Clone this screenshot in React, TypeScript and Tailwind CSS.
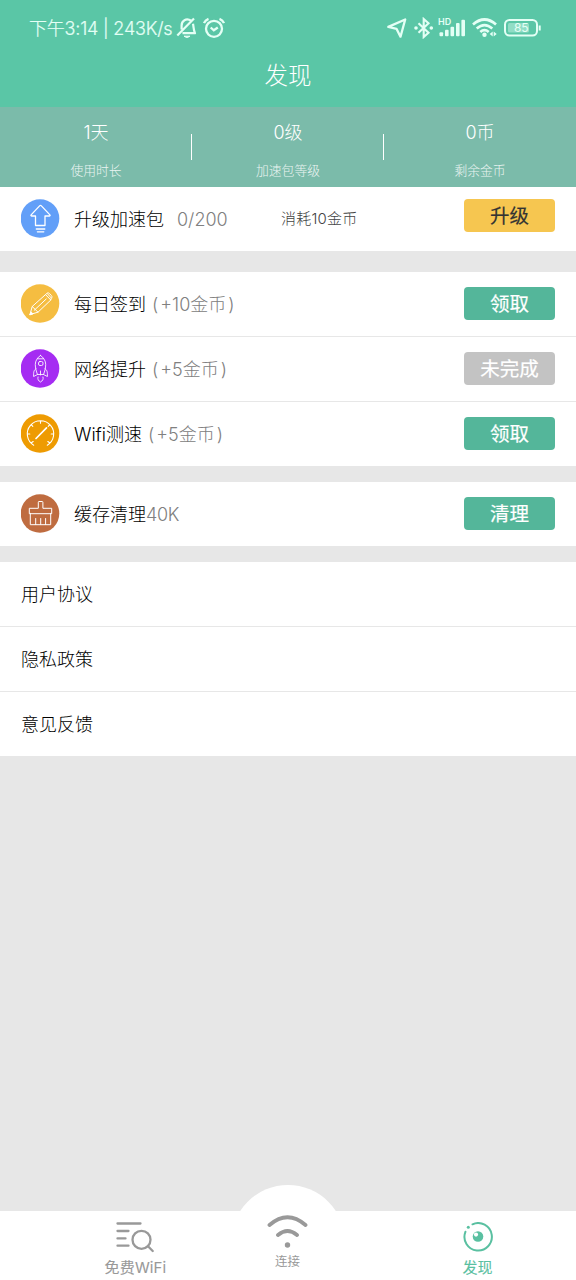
import React from 'react';

const PencilIcon = () => (
  <svg className="w-[39px] h-[39px] -mt-px" viewBox="0 0 39 39" fill="none" stroke="#fff" strokeWidth="1" strokeLinejoin="round" strokeLinecap="round">
    <circle cx="19" cy="19.5" r="19.3" fill="#f5bd41" stroke="none" />
    <path d="M9 30.500l2.200-8L24.500 10.600l5.300 5.400-12.800 12.200-8 2.300zM11.200 22.500l5.800 5.700M13.200 26.300l12-11.300M24.500 10.600l1.300-1.200c1-.9 2-.6 2.800.2l1.800 2c.8.9.8 1.800-.1 2.600L29.800 16M26.300 9.600l4 4.400" />
    <path d="M9 30.500l1-2.700 1.700 1.900z" fill="#fff" />
  </svg>
);

const UpIcon = () => (
  <svg className="w-[39px] h-[39px] -mt-px" viewBox="0 0 39 39" fill="none" stroke="#fff" strokeWidth="1.300" strokeLinejoin="round" strokeLinecap="round">
    <circle cx="19" cy="19.500" r="19.300" fill="#629ff8" stroke="none" />
    <path d="M14.500 26.500V17H10.500c-.7 0-.8-.6-.4-1.100l8.500-9c.6-.6 1.200-.6 1.800 0l8.500 9c.4.500.3 1.100-.4 1.100H24v9.500zM15.300 30h8.500M16.400 32.800h6.400" />
  </svg>
);

const RocketIcon = () => (
  <svg className="w-[39px] h-[39px] -mt-px" viewBox="0 0 39 39" fill="none" stroke="#fff" strokeOpacity="0.850" strokeWidth="1" strokeLinejoin="round" strokeLinecap="round">
    <circle cx="19" cy="19.500" r="19.300" fill="#a52cf2" stroke="none" />
    <path d="M19.500 6.500c-3.300 2-5.200 5.500-5.200 9 0 3.400.9 6.700 2.200 10h6c1.300-3.300 2.200-6.600 2.200-10 0-3.500-1.900-7-5.200-9zM16.500 9.800h6M15 19.700c-2 1.300-2.600 3-2.400 7.800l3.900-2M24 19.700c2 1.300 2.600 3 2.400 7.800l-3.900-2M19.500 22v4M17 28c-.6 2.300.3 3.800 2.500 5 2.200-1.200 3.100-2.700 2.500-5" />
    <rect x="17.500" y="12.500" width="4.500" height="4" rx="1.500" />
  </svg>
);

const SpeedIcon = () => (
  <svg className="w-[39px] h-[39px] -mt-px" viewBox="0 0 39 39" fill="none" stroke="#fff" strokeWidth="1.100" strokeLinecap="round">
    <circle cx="19" cy="19.500" r="19.300" fill="#ee9b02" stroke="none" />
    <path d="M12.700 31.200A13.200 13.200 0 1 1 26.300 31.200M10 29l2.200-1.500M29 29l-2.200-1.500M6.300 20h2.500M32.700 20h-2.500M10.300 10.700l1.500 1.600M28.700 10.700l-1.500 1.600M19.500 7v2.300" />
    <path d="M15 24.500L25.500 13.800" strokeWidth="1.700" />
  </svg>
);

const BroomIcon = () => (
  <svg className="w-[39px] h-[39px] -mt-px" viewBox="0 0 39 39" fill="none" stroke="#fff" strokeWidth="1" strokeLinejoin="round" strokeLinecap="round">
    <circle cx="19" cy="19.500" r="19.300" fill="#bf6c40" stroke="none" />
    <path d="M8.300 19.300v-5h9V8.200q0-.7.700-.7h3.200q.7 0 .7.700v6.100h8.800v5zM9.300 19.300v11.400h20.400V19.300M14.700 24.500v6M19.700 24.500v6M24.600 24.500v6" />
  </svg>
);

interface TaskRowProps {
  icon: React.ReactNode;
  title: string;
  extra: string;
  action: string;
  extraClass?: string;
  buttonClass?: string;
  note?: string;
}

const TaskRow: React.FC<TaskRowProps> = ({ icon, title, extra, action, extraClass = '', buttonClass = 'bg-[#54b69a] text-white', note }) => (
  <div className="h-16 pl-[21px] pr-[21px] flex items-center bg-white whitespace-nowrap">
    {icon}
    <div className="ml-[14px] w-[207px] text-[18px] font-light text-black flex items-center">
      <span>{title}</span>
      <span className={`text-[#808080] ${extraClass}`}>{extra}</span>
    </div>
    <span className="pt-px text-[15px] tracking-[0.200px] font-light text-[#444]">{note}</span>
    <button className={`ml-auto -mt-[2px] w-[91px] h-[33px] pt-[3px] rounded-[4px] text-[19.500px] leading-none [-webkit-text-stroke:0.2px_currentColor] flex items-center justify-center ${buttonClass}`}>
      {action}
    </button>
  </div>
);

const stats = [
  { value: '1天', label: '使用时长' },
  { value: '0级', label: '加速包等级' },
  { value: '0币', label: '剩余金币' },
];

const links = ['用户协议', '隐私政策', '意见反馈'];

const StatusBar = () => (
  <div className="h-[55px] pl-[29px] pr-[35px] pt-px flex items-center text-[#e4fff5]">
    <span className="w-[146px] text-[18px] font-light tracking-[-0.200px] whitespace-nowrap [-webkit-text-stroke:0.2px_currentColor]">下午3:14 | 243K/s</span>
    <svg className="ml-[1px] w-[22px] h-[22px]" viewBox="0 0 22 22" fill="none" stroke="currentColor" strokeWidth="2.200" strokeLinejoin="round">
      <path d="M15.300 3.800C10 .5 5.600 4 5.600 8.500v4M17 6.700c.8 4 .5 6.800 2 9.500H6.500M1.300 18.500L18 1.500" />
      <path d="M8 19.200h6q-3 2.600-6 0z" fill="currentColor" strokeWidth="1" />
    </svg>
    <svg className="ml-[5px] w-[22px] h-[22px]" viewBox="0 0 22 22" fill="none" stroke="currentColor" strokeWidth="2.300">
      <circle cx="11" cy="11.800" r="8" />
      <path d="M1 6.200q1.200-3.200 4.500-4.400M21 6.200q-1.200-3.200-4.500-4.400M7.700 10.500l3.100 2.800 4-2.800" />
    </svg>
    <svg className="ml-auto w-[20px] h-[20px]" viewBox="0 0 20 20" fill="none" stroke="currentColor" strokeWidth="2.300" strokeLinejoin="round">
      <path d="M1.300 8.900L18.200 1.500 13.500 18.700 9.600 10.900z" />
    </svg>
    <svg className="ml-[7px] w-[20px] h-[22px]" viewBox="0 0 20 22" fill="none" stroke="currentColor" strokeWidth="2.100">
      <path d="M4.500 6.200l10 9.600-4.800 4.200V2l4.800 4.200-10 9.600" />
      <circle cx="2" cy="11" r="1.800" fill="currentColor" stroke="none" />
      <circle cx="17.300" cy="11" r="1.800" fill="currentColor" stroke="none" />
    </svg>
    <svg className="ml-[4px] w-[28px] h-[22px]" viewBox="0 0 28 22" fill="currentColor">
      <text x="0" y="8.300" fontSize="9" fontWeight="600" fontFamily="Inter, sans-serif">HD</text>
      <rect x="1.500" y="15.300" width="3.600" height="4" rx="1" />
      <rect x="7" y="12.800" width="3.600" height="6.500" rx="1" />
      <rect x="12.500" y="9.800" width="3.600" height="9.500" rx="1" />
      <rect x="18" y="6.100" width="3.600" height="13.200" rx="1" />
      <rect x="23.400" y="2.700" width="3.600" height="16.600" rx="1" />
    </svg>
    <svg className="ml-[6px] w-[25px] h-[22px]" viewBox="0 0 25 22" fill="none" stroke="currentColor" strokeWidth="2.700">
      <path d="M1 7.500Q12.500-2.500 24 7.500M4.700 11.500Q12.500 4.700 20.300 11.500M8.300 15Q12.500 11.300 16.700 15" />
      <circle cx="12.500" cy="17.700" r="2.200" fill="currentColor" stroke="none" />
      <path d="M20.700 14.500v5l-3-2.500zM21.700 14.500v5l3-2.500z" fill="currentColor" stroke="none" />
    </svg>
    <svg className="ml-[7px] w-[37px] h-[18px]" viewBox="0 0 37 18" fill="none" stroke="currentColor">
      <rect x="1" y="1" width="32" height="15.500" rx="4.500" strokeWidth="2" />
      <rect x="4" y="4" width="21" height="9.500" rx="1.500" fill="currentColor" fillOpacity="0.400" stroke="none" />
      <path d="M35.700 6.500v5" strokeWidth="2" />
      <text x="17.300" y="13" textAnchor="middle" fill="currentColor" stroke="none" fontSize="12" fontFamily="Inter, sans-serif">85</text>
    </svg>
  </div>
);

export default function App() {
  return (
    <div className="w-[576px] h-[1280px] flex flex-col bg-[#e7e7e7] overflow-hidden font-['Inter','Noto_Sans_CJK_SC',sans-serif]">
      <header className="h-[107px] shrink-0 bg-[#5ac6a6]">
        <StatusBar />
        <h1 className="h-[41px] text-[23.500px] font-light text-white flex items-center justify-center">发现</h1>
      </header>

      <section className="h-20 shrink-0 bg-[#7bbbaa] text-white font-light flex items-center">
        {stats.map((s, idx) => (
          <React.Fragment key={idx}>
            {idx > 0 && <div className="w-px h-[26px] -ml-px bg-white" />}
            <div className="flex-1 h-full flex flex-col items-center">
              <span className="mt-[14px] h-6 leading-6 text-[18px]">{s.value}</span>
              <span className="mt-[16px] h-5 leading-5 text-[12.800px] opacity-85">{s.label}</span>
            </div>
          </React.Fragment>
        ))}
      </section>

      <TaskRow
        icon={<UpIcon />}
        title="升级加速包"
        extra="0/200"
        extraClass="ml-[13px]"
        note="消耗10金币"
        action="升级"
        buttonClass="bg-[#f6c650] text-[#333] mb-[5px]"
      />

      <div className="mt-[21px] flex flex-col gap-px">
        <TaskRow icon={<PencilIcon />} title="每日签到" extra="( +10金币 )" extraClass="ml-[6px] [word-spacing:-3px]" action="领取" />
        <TaskRow icon={<RocketIcon />} title="网络提升" extra="( +5金币 )" extraClass="ml-[6px] [word-spacing:-3px]" action="未完成" buttonClass="bg-[#c3c3c3] text-white" />
        <TaskRow icon={<SpeedIcon />} title="Wifi测速" extra="( +5金币 )" extraClass="ml-[6px] [word-spacing:-3px]" action="领取" />
      </div>

      <div className="mt-4">
        <TaskRow icon={<BroomIcon />} title="缓存清理" extra="40K" extraClass="tracking-[-0.400px]" action="清理" />
      </div>

      <div className="mt-4 flex flex-col gap-px">
        {links.map((text) => (
          <div key={text} className="h-16 pl-[21px] bg-white text-[18px] font-light text-black flex items-center">{text}</div>
        ))}
      </div>

      <nav className="relative mt-auto h-[69px] shrink-0 bg-white flex text-[#999]">
        {/* raised bump behind the middle tab */}
        <div className="absolute left-1/2 -top-[26px] -ml-[57px] w-[114px] h-[114px] rounded-full bg-white" />
        <div className="w-[230px] pl-[41px] flex flex-col items-center">
          <svg className="mt-[10px] -ml-[2px] w-[38px] h-[32px]" viewBox="0 0 38 32" fill="none" stroke="currentColor" strokeWidth="2.300" strokeLinecap="round">
            <path d="M1.500 2.500h23M1.500 10h11M1.500 17.400h8M1.500 24.700h11" />
            <circle cx="25.500" cy="18.800" r="9" />
            <path d="M32 25.300l4.700 4.700" />
          </svg>
          <span className="mt-[5px] leading-5 text-[15px] tracking-[0.150px] [-webkit-text-stroke:0.1px_currentColor]">免费WiFi</span>
        </div>
        <div className="relative w-[115px] flex flex-col items-center">
          <svg className="mt-[3px] w-[41px] h-[34px]" viewBox="0 0 41 34" fill="none" stroke="currentColor" strokeWidth="3.800" strokeLinecap="round">
            <path d="M2.500 11Q20.500-4.500 38.500 11M11 21Q20.500 13 30 21" />
            <circle cx="20.500" cy="31" r="2.700" fill="currentColor" stroke="none" />
          </svg>
          <span className="mt-[4px] leading-5 text-[12.500px]">连接</span>
        </div>
        <div className="flex-1 pl-[34px] flex flex-col items-center text-[#5ac0a1]">
          <svg className="mt-[11px] w-[30px] h-[30px]" viewBox="0 0 30 30" fill="none" stroke="currentColor" strokeWidth="2" strokeLinecap="round">
            <path d="M9.500 2.300A13.700 13.700 0 1 1 2.400 9.800" />
            <circle cx="5.300" cy="5.300" r="1.500" fill="currentColor" stroke="none" />
            <circle cx="15" cy="14.500" r="5.300" fill="currentColor" stroke="none" />
            <circle cx="13" cy="12.600" r="2.100" fill="#fff" stroke="none" />
          </svg>
          <span className="mt-[6px] leading-5 text-[15px] [-webkit-text-stroke:0.1px_currentColor]">发现</span>
        </div>
      </nav>
    </div>
  );
}
